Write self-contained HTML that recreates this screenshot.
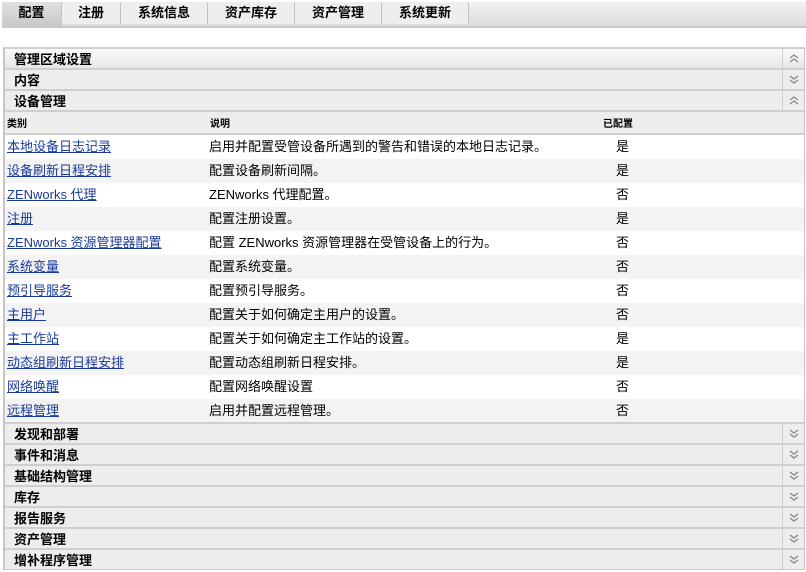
<!DOCTYPE html>
<html><head><meta charset="utf-8"><style>
*{margin:0;padding:0;box-sizing:border-box}
body{width:806px;height:572px;background:#fff;font-family:"Liberation Sans","Noto Sans CJK SC",sans-serif;font-size:13px;color:#000;position:relative;overflow:hidden}
.tabs{position:absolute;left:2px;top:2px;width:804px;height:26px;background:linear-gradient(#f2f2f1,#dcdcda);border-bottom:2px solid #c8c8c6}
.tab{position:absolute;top:0;height:22px;border-right:1px solid #c4c4c2;background:#eeeeec;font-weight:bold;text-align:center;line-height:20px;font-size:13px;font-family:"Noto Sans CJK SC",sans-serif}
.tab.act{background:linear-gradient(#e0e0de,#c9c9c7);height:24px}
.panel{position:absolute;left:3px;top:47px;width:802px;height:523px;border:1px solid #c6c6c6;border-left:2px solid #c6c6c6;border-top:2px solid #cfcfcf;overflow:hidden}
.h{position:absolute;left:0;width:799px;height:21px;background:#ededeb;border-bottom:2px solid #cfcfcd;font-weight:bold;font-family:"Noto Sans CJK SC",sans-serif;font-size:13px;line-height:19px;padding-left:9px}
.h .ic{position:absolute;right:0;top:0;width:22px;height:19px;border-left:1px solid #cfcfcd}
.h .ic svg{position:absolute;left:6px;top:5px}
.r{position:absolute;left:0;width:799px;height:24px;line-height:24px}
.r a{position:absolute;left:2px;color:#1a3a9a;text-decoration:underline}
.r .d{position:absolute;left:204px}
.r .c{position:absolute;left:611px}
.g{background:#f3f3f3}
</style></head><body>
<svg width="0" height="0" style="position:absolute"><defs>
<g id="dn"><path d="M1 1l4 3 4-3M1 5l4 3 4-3" fill="none" stroke="#888" stroke-width="1.3"/></g>
<g id="up"><path d="M1 4l4-3 4 3M1 8l4-3 4 3" fill="none" stroke="#888" stroke-width="1.3"/></g>
</defs></svg>
<div class="tabs">
<div class="tab act" style="left:0;width:60px">配置</div>
<div class="tab" style="left:60px;width:59px">注册</div>
<div class="tab" style="left:119px;width:87px">系统信息</div>
<div class="tab" style="left:206px;width:87px">资产库存</div>
<div class="tab" style="left:293px;width:87px">资产管理</div>
<div class="tab" style="left:380px;width:87px">系统更新</div>
</div>
<div class="panel">
<div class="h" style="top:0;background:linear-gradient(#fbfbfb,#e6e6e4)">管理区域设置<span class="ic"><svg width="10" height="9"><use href="#up"/></svg></span></div>
<div class="h" style="top:21px">内容<span class="ic"><svg width="10" height="9"><use href="#dn"/></svg></span></div>
<div class="h" style="top:42px">设备管理<span class="ic"><svg width="10" height="9"><use href="#up"/></svg></span></div>
<div class="h" style="top:63px;height:23px;padding-left:2px;font-size:10px;line-height:21px">类别<span style="position:absolute;left:205px">说明</span><span style="position:absolute;left:598px">已配置</span></div>
<div class="r" style="top:86px"><a>本地设备日志记录</a><span class="d">启用并配置受管设备所遇到的警告和错误的本地日志记录。</span><span class="c">是</span></div>
<div class="r g" style="top:110px"><a>设备刷新日程安排</a><span class="d">配置设备刷新间隔。</span><span class="c">是</span></div>
<div class="r" style="top:134px"><a>ZENworks 代理</a><span class="d">ZENworks 代理配置。</span><span class="c">否</span></div>
<div class="r g" style="top:158px"><a>注册</a><span class="d">配置注册设置。</span><span class="c">是</span></div>
<div class="r" style="top:182px"><a>ZENworks 资源管理器配置</a><span class="d">配置 ZENworks 资源管理器在受管设备上的行为。</span><span class="c">否</span></div>
<div class="r g" style="top:206px"><a>系统变量</a><span class="d">配置系统变量。</span><span class="c">否</span></div>
<div class="r" style="top:230px"><a>预引导服务</a><span class="d">配置预引导服务。</span><span class="c">否</span></div>
<div class="r g" style="top:254px"><a>主用户</a><span class="d">配置关于如何确定主用户的设置。</span><span class="c">否</span></div>
<div class="r" style="top:278px"><a>主工作站</a><span class="d">配置关于如何确定主工作站的设置。</span><span class="c">是</span></div>
<div class="r g" style="top:302px"><a>动态组刷新日程安排</a><span class="d">配置动态组刷新日程安排。</span><span class="c">是</span></div>
<div class="r" style="top:326px"><a>网络唤醒</a><span class="d">配置网络唤醒设置</span><span class="c">否</span></div>
<div class="r g" style="top:350px;border-bottom:2px solid #cfcfcd;height:25px"><a>远程管理</a><span class="d">启用并配置远程管理。</span><span class="c">否</span></div>
<div class="h" style="top:375px">发现和部署<span class="ic"><svg width="10" height="9"><use href="#dn"/></svg></span></div>
<div class="h" style="top:396px">事件和消息<span class="ic"><svg width="10" height="9"><use href="#dn"/></svg></span></div>
<div class="h" style="top:417px">基础结构管理<span class="ic"><svg width="10" height="9"><use href="#dn"/></svg></span></div>
<div class="h" style="top:438px">库存<span class="ic"><svg width="10" height="9"><use href="#dn"/></svg></span></div>
<div class="h" style="top:459px">报告服务<span class="ic"><svg width="10" height="9"><use href="#dn"/></svg></span></div>
<div class="h" style="top:480px">资产管理<span class="ic"><svg width="10" height="9"><use href="#dn"/></svg></span></div>
<div class="h" style="top:501px">增补程序管理<span class="ic"><svg width="10" height="9"><use href="#dn"/></svg></span></div>
</div>
</body></html>
